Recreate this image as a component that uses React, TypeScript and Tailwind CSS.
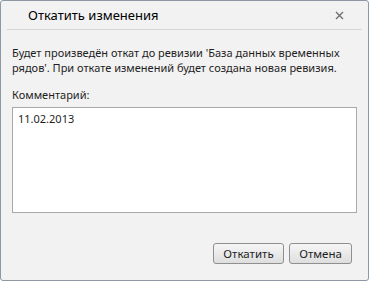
import React from 'react';

const font = { fontFamily: '"Noto Sans", "DejaVu Sans", sans-serif' };

export default function App() {
  return (
    <div
      className="w-[369px] h-[281px] flex flex-col bg-[#f2f2f2] border border-[#8c98a3] rounded-[3px] text-[#1e1e1e]"
      style={font}
    >
      {/* Header */}
      <div className="h-[29px] mx-[6px] flex items-center justify-between border-b border-[#d6d6d6]">
        <span className="pl-[21px] text-[13px] leading-none text-black">Откатить изменения</span>
        <span className="pr-[18px] pt-[1px]">
          <svg width="9" height="9" viewBox="0 0 9 9">
            <path d="M1 1 L8 8 M8 1 L1 8" stroke="#707070" strokeWidth="1.4" />
          </svg>
        </span>
      </div>

      {/* Body */}
      <div className="flex-1 flex flex-col px-[11px] pt-[15px] text-[11px] leading-[15px]">
        <p>
          Будет произведён откат до ревизии 'База данных временных рядов'. При откате изменений будет создана новая ревизия.
        </p>
        <p className="mt-[12px]">Комментарий:</p>
        <div className="mt-[5px] h-[106px] bg-white border border-[#a9a9a9] px-[5px] pt-[3px]">
          11.02.2013
        </div>
        <div className="flex justify-end gap-[5px] mt-[30px] pr-[5px]">
          <button className="w-[71px] h-[21px] rounded-[3px] border border-[#8f8f8f] bg-gradient-to-b from-[#f6f6f6] to-[#dedede] text-[11.5px] leading-none">
            Откатить
          </button>
          <button className="w-[63px] h-[21px] rounded-[3px] border border-[#8f8f8f] bg-gradient-to-b from-[#f6f6f6] to-[#dedede] text-[11.5px] leading-none">
            Отмена
          </button>
        </div>
      </div>
    </div>
  );
}
